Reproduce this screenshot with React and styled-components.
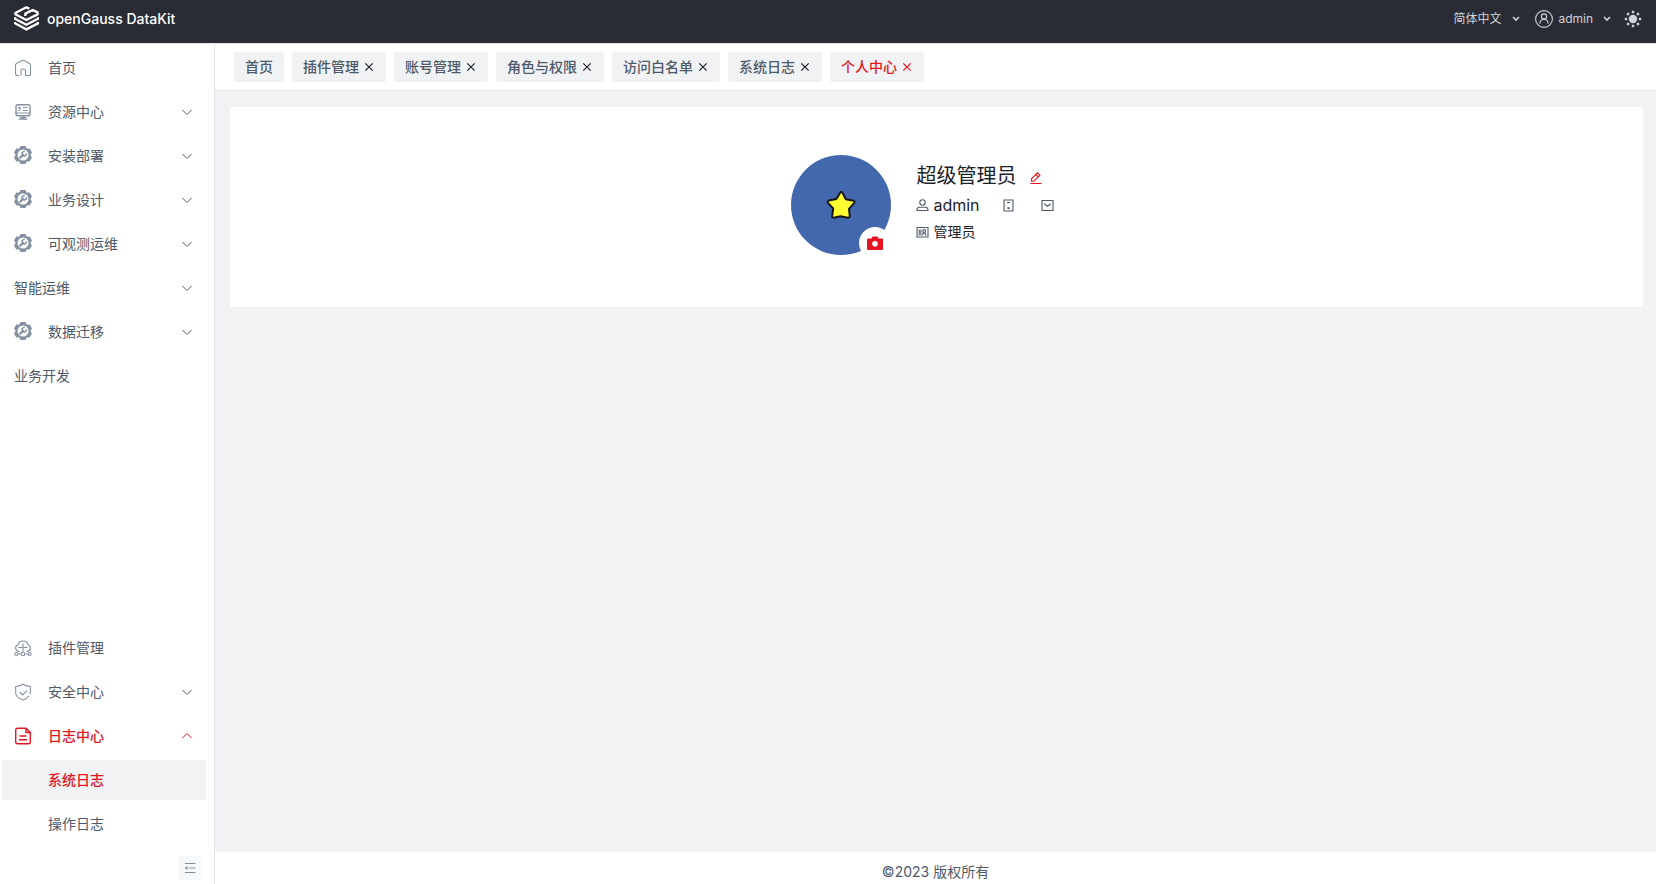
import React from "react";
import styled, { createGlobalStyle } from "styled-components";

const c = {
  dark: "#2a2c35",
  line: "#e5e6eb",
  bg: "#f1f2f4",
  text: "#4e5969",
  strong: "#1d2129",
  icon: "#8591a0",
  red: "#e41520",
  light: "#cfd3da",
};

const Global = createGlobalStyle`
  *, *::before, *::after { box-sizing: border-box; }
  body {
    margin: 0;
    font-family: Inter, "Noto Sans CJK SC", sans-serif;
    font-size: 14px;
    line-height: 22px;
    color: ${c.strong};
    background: ${c.bg};
  }
  button, select {
    font: inherit;
    color: inherit;
    border: 0;
    padding: 0;
    margin: 0;
    background: none;
    cursor: pointer;
  }
  a { color: inherit; text-decoration: none; }
  ul { list-style: none; margin: 0; padding: 0; }
  svg { display: block; flex: none; }
`;

const Page = styled.div`
  display: flex;
  flex-direction: column;
  height: 100vh;
  overflow: hidden;
`;

const Header = styled.header`
  display: flex;
  flex: none;
  align-items: center;
  justify-content: space-between;
  height: 44px;
  padding: 0 14px 6px;
  background: ${c.dark};
  border-bottom: 1px solid ${c.line};
`;

const Brand = styled.a`
  display: flex;
  align-items: center;
  gap: 8px;
  color: #fff;
  font-weight: 500;
`;

const HeaderTools = styled.div`
  display: flex;
  align-items: center;
  color: ${c.light};
  font-size: 12px;
`;

const LanguageField = styled.label`
  display: flex;
  align-items: center;
  gap: 10px;
  margin-right: 14px;
`;

const LanguageSelect = styled.select`
  appearance: none;
  width: 48px;
  outline: none;
`;

const UserButton = styled.button`
  display: flex;
  align-items: center;
  margin-right: 12px;
  gap: 5px;
  > span { margin-right: 4px; }
`;

const Body = styled.div`
  display: flex;
  flex: 1;
  min-height: 0;
`;

const Sidebar = styled.nav`
  display: flex;
  flex: none;
  flex-direction: column;
  justify-content: space-between;
  width: 215px;
  padding: 4px 8px 4px 2px;
  background: #fff;
  border-right: 1px solid ${c.line};
`;

const SidebarFoot = styled.div`
  display: flex;
  flex-direction: column;
`;

const Menu = styled.ul`
  display: flex;
  flex-direction: column;
  gap: 4px;
`;

const MenuLink = styled.a`
  display: flex;
  align-items: center;
  height: 40px;
  padding: 0 13px 0 ${(p) => (p.$nested ? 46 : 12)}px;
  border-radius: 2px;
  color: ${(p) => (p.$active ? c.red : c.text)};
  font-weight: ${(p) => (p.$active ? 500 : 400)};
  background: ${(p) => (p.$selected ? c.bg : "transparent")};
  > svg:first-child {
    margin-right: 16px;
    color: ${(p) => (p.$active ? c.red : c.icon)};
  }
  > span { flex: 1; }
`;

const CollapseButton = styled.button`
  display: grid;
  place-items: center;
  align-self: flex-end;
  width: 24px;
  height: 24px;
  margin: 12px 4px 0 0;
  border-radius: 2px;
  color: ${c.icon};
  background: #f7f8fa;
`;

const Main = styled.div`
  display: flex;
  flex: 1;
  flex-direction: column;
  min-width: 0;
`;

const TabBar = styled.div`
  display: flex;
  flex: none;
  gap: 8px;
  height: 47px;
  padding: 8px 19px;
  background: #fff;
  border-bottom: 1px solid ${c.line};
`;

const Tab = styled.div`
  display: flex;
  align-items: center;
  gap: 4px;
  height: 30px;
  padding: 0 11px;
  border-radius: 2px;
  font-weight: 500;
  color: ${(p) => (p.$active ? c.red : c.text)};
  background: ${c.bg};
  > button { color: ${(p) => (p.$active ? c.red : c.strong)}; }
`;

const Content = styled.main`
  flex: 1;
  padding: 16px 13px 16px 15px;
`;

const ProfileCard = styled.section`
  display: flex;
  align-items: center;
  justify-content: center;
  gap: 25px;
  height: 200px;
  padding-bottom: 4px;
  border-radius: 2px;
  background: #fff;
`;

const Avatar = styled.div`
  position: relative;
  display: grid;
  place-items: center;
  width: 100px;
  height: 100px;
  border-radius: 50%;
  background: #4468ae;
`;

const CameraButton = styled.button`
  position: absolute;
  right: 0;
  bottom: -4px;
  display: grid;
  place-items: center;
  width: 32px;
  height: 32px;
  border-radius: 50%;
  color: ${c.red};
  background: #fff;
`;

const Info = styled.div`
  display: flex;
  flex-direction: column;
  gap: 3px;
  padding-bottom: 4px;
`;

const NameRow = styled.div`
  display: flex;
  align-items: center;
  gap: 14px;
`;

const Name = styled.h1`
  margin: 0;
  font-size: 20px;
  font-weight: 400;
  line-height: 28px;
`;

const EditButton = styled.button`
  color: ${c.red};
  padding-top: 3px;
`;

const DetailRow = styled.div`
  display: flex;
  gap: 22px;
  padding-right: 24px;
`;

const Detail = styled.span`
  display: flex;
  align-items: center;
  gap: 4px;
  min-width: 17px;
  font-size: ${(p) => (p.$large ? 16 : 14)}px;
  line-height: 24px;
  > svg { color: ${c.text}; }
`;

const Footer = styled.footer`
  flex: none;
  height: 32px;
  padding-top: 9px;
  text-align: center;
  color: ${c.text};
  background: #fff;
`;

const Svg = ({ size = 18, w, h, box, children, sw = 1 }) => (
  <svg
    width={w || size}
    height={h || size}
    viewBox={box || `0 0 ${w || size} ${h || size}`}
    fill="none"
    stroke="currentColor"
    strokeWidth={sw}
    aria-hidden="true"
  >
    {children}
  </svg>
);

const Logo = () => (
  <Svg w={25} h={25} box="0 0 75 75" sw={7}>
    <path d="M46 8 37 4 4 21v4l33 17 34-17v-6L56 12 34 23v7" strokeLinejoin="round" />
    <path d="M3 34v4l34 18 35-18v-4" />
    <path d="M3 48v4l34 18 35-18v-4" />
  </Svg>
);

const Chevron = ({ up }) => (
  <Svg size={12}>
    <path d={up ? "M1.500 8 6 3.500 10.500 8" : "M1.500 4 6 8.500 10.500 4"} />
  </Svg>
);

const SmallChevron = () => (
  <Svg size={10} sw={1.6}>
    <path d="M2 3 5 6l3-3" />
  </Svg>
);

const Close = () => (
  <Svg size={12} sw={1.2}>
    <path d="m2.300 2.300 7.400 7.400M9.700 2.300 2.300 9.700" />
  </Svg>
);

const Home = () => (
  <Svg sw={1.1}>
    <path d="M5 16.500H3.500a2 2 0 0 1-2-2V6.200a2 2 0 0 1 1-1.700L8 1.600a2 2 0 0 1 2 0l5.500 2.900a2 2 0 0 1 1 1.700v8.300a2 2 0 0 1-2 2H11.500V11.500A1.500 1.500 0 0 0 10 10H8.500A1.500 1.500 0 0 0 7 11.500v5" />
  </Svg>
);

const Monitor = () => (
  <Svg sw={1.4}>
    <rect x="2" y="1.700" width="14" height="11" rx="1.500" />
    <path d="M2 10h14M4.500 4l2 1.500M6.500 4l-2 1.500M4.500 7.800l2-1M9 4.500h4.500M9 7.500h4.500M9 12.700v2.800M6 14.700h6M4.500 16.200h9" strokeWidth="1.200" />
  </Svg>
);

const Gear = () => (
  <Svg w={18} h={20}>
    <path
      d="M6.500 0h5l.8 2 1.200.7 2.200-.3L18 6.500 16.700 8.300v1.400l1.300 1.800-2.300 4.100-2.200-.3-1.200.7-.8 2h-5l-.8-2-1.200-.7-2.200.3L0 11.500l1.300-1.800V8.300L0 6.500l2.300-4.100 2.200.3L5.700 2Z"
      fill="currentColor"
      stroke="none"
    />
    <circle cx="9" cy="9" r="5.500" fill="#fff" stroke="none" />
    <path d="m6.200 11.800 2.800-2.800" strokeWidth="2.200" strokeLinecap="round" />
    <path d="M10.800 5.600A2.200 2.200 0 1 0 12.400 7.400" strokeWidth="1.600" />
  </Svg>
);

const Cloud = () => (
  <Svg sw={1.1}>
    <path d="M5.500 12.500H4.800A3.500 3.500 0 0 1 4 5.700a5.200 5.200 0 0 1 10 0 3.500 3.500 0 0 1-.8 6.800h-.7M9 4.500v8.500M4.500 8.500h9M3.800 15h3.400M10.800 15h3.400" />
    <circle cx="9" cy="15" r="1.800" />
    <circle cx="2.300" cy="15" r="1.500" />
    <circle cx="15.700" cy="15" r="1.500" />
  </Svg>
);

const Shield = () => (
  <Svg sw={1.1}>
    <path d="M16.300 11V3.500Q12.500 3.500 9 1.300 5.500 3.500 1.700 3.500V10c0 3 3 5.500 7.300 7 2.800-1 4.800-2.500 6-4.300M5.700 9l3 3 4.300-4.300" />
  </Svg>
);

const Doc = () => (
  <Svg sw={1.4}>
    <path d="M12 1.300H3.500A1.800 1.800 0 0 0 1.700 3v12a1.800 1.800 0 0 0 1.800 1.800h11a1.800 1.800 0 0 0 1.800-1.800V5.500ZM12 1.300v4.200h4.300M5.500 9h7M5 12.700h8" />
  </Svg>
);

const Collapse = () => (
  <Svg size={12} sw={1.1}>
    <path d="M1 1.500h10.500M5 6h6.500M1 10.500h10.500" />
    <path d="M.5 6 3.500 4v4Z" fill="currentColor" stroke="none" />
  </Svg>
);

const UserCircle = () => (
  <Svg size={18} sw={1.1}>
    <circle cx="9" cy="9" r="8.400" />
    <circle cx="9" cy="6.500" r="2.600" />
    <path d="M4.800 13.800c.3-2.900 1.900-4.600 4.200-4.600s3.900 1.700 4.200 4.600" />
  </Svg>
);

const Sun = () => (
  <Svg size={18}>
    <circle cx="9" cy="9" r="4.200" fill="currentColor" stroke="none" />
    {[0, 45, 90, 135, 180, 225, 270, 315].map((a) => (
      <rect
        key={a}
        x="7.800"
        y=".8"
        width="2.400"
        height="2.400"
        fill="currentColor"
        stroke="none"
        transform={`rotate(${a} 9 9)`}
      />
    ))}
  </Svg>
);

const Star = () => (
  <Svg size={30}>
    <path
      d="M14.500 2.200q1.200-.8 2 .5l3.300 6.500 7.700 1.500q1.800.7.700 2.200l-5.200 6 .8 7.300q-.2 1.700-2 1.600l-7.300-1.500-6.800 1.500q-1.700 0-1.500-1.800l1-7.500-5.300-5.600q-.8-1.600.8-2.300l7.600-1.600Z"
      fill="#ffff33"
      stroke="#161616"
      strokeWidth="2"
      strokeLinejoin="round"
    />
  </Svg>
);

const Camera = () => (
  <Svg size={16}>
    <path
      d="M5.500 1.500h5l1 2H15a1 1 0 0 1 1 1V14a1 1 0 0 1-1 1H1a1 1 0 0 1-1-1V4.500a1 1 0 0 1 1-1h3.500Z"
      fill="currentColor"
      stroke="none"
    />
    <circle cx="8" cy="8.700" r="2.800" fill="#fff" stroke="none" />
  </Svg>
);

const Pencil = () => (
  <Svg size={12} sw={1.1}>
    <path d="M.5 11.500h11M1.500 9.200V6.800L7.500.8l2.400 2.400-6 6ZM5.800 2.500l2.400 2.400" />
  </Svg>
);

const Person = () => (
  <Svg size={13} sw={1.1}>
    <circle cx="6.500" cy="3.500" r="2.700" />
    <path d="M1 11.500v-.7A2.700 2.700 0 0 1 3.700 8.200h5.600a2.700 2.700 0 0 1 2.700 2.600v.7Z" />
  </Svg>
);

const Phone = () => (
  <Svg size={13} sw={1.1}>
    <path d="M2 1h9v11H2ZM5 3.500h3" />
    <path d="M5.500 8.200h2v2h-2Z" fill="currentColor" stroke="none" />
  </Svg>
);

const Mail = () => (
  <Svg size={13} sw={1.1}>
    <path d="M1 1.500h11v10H1ZM3.200 4.700l3.300 2.500 3.300-2.500" />
  </Svg>
);

const IdCard = () => (
  <Svg size={13} sw={1.1}>
    <path d="M1 1.500h11v9.500H1ZM3.200 3.500v6M4.900 3.500v6M6.500 9.500 7 7.200h2.300l.8 2.300" />
    <circle cx="8.200" cy="5" r="1.400" />
  </Svg>
);

const topMenu = [
  { label: "首页", Icon: Home },
  { label: "资源中心", Icon: Monitor, arrow: true },
  { label: "安装部署", Icon: Gear, arrow: true },
  { label: "业务设计", Icon: Gear, arrow: true },
  { label: "可观测运维", Icon: Gear, arrow: true },
  { label: "智能运维", arrow: true },
  { label: "数据迁移", Icon: Gear, arrow: true },
  { label: "业务开发" },
];

const bottomMenu = [
  { label: "插件管理", Icon: Cloud },
  { label: "安全中心", Icon: Shield, arrow: true },
  { label: "日志中心", Icon: Doc, arrow: true, active: true, up: true },
  { label: "系统日志", nested: true, active: true, selected: true },
  { label: "操作日志", nested: true },
];

const tabs = ["首页", "插件管理", "账号管理", "角色与权限", "访问白名单", "系统日志", "个人中心"];

const MenuList = ({ items }) => (
  <Menu>
    {items.map(({ label, Icon, arrow, up, active, selected, nested }) => (
      <li key={label}>
        <MenuLink href="#" $active={active} $selected={selected} $nested={nested}>
          {Icon && <Icon />}
          <span>{label}</span>
          {arrow && <Chevron up={up} />}
        </MenuLink>
      </li>
    ))}
  </Menu>
);

export default function App() {
  return (
    <Page>
      <Global />
      <Header>
        <Brand href="#">
          <Logo />
          openGauss DataKit
        </Brand>
        <HeaderTools>
          <LanguageField>
            <LanguageSelect aria-label="简体中文">
              <option>简体中文</option>
            </LanguageSelect>
            <SmallChevron />
          </LanguageField>
          <UserButton>
            <UserCircle />
            <span>admin</span>
            <SmallChevron />
          </UserButton>
          <button aria-label="主题">
            <Sun />
          </button>
        </HeaderTools>
      </Header>
      <Body>
        <Sidebar>
          <MenuList items={topMenu} />
          <SidebarFoot>
            <MenuList items={bottomMenu} />
            <CollapseButton aria-label="收起">
              <Collapse />
            </CollapseButton>
          </SidebarFoot>
        </Sidebar>
        <Main>
          <TabBar>
            {tabs.map((t, i) => (
              <Tab key={t} $active={i === tabs.length - 1}>
                <a href="#">{t}</a>
                {i > 0 && (
                  <button aria-label={`关闭${t}`}>
                    <Close />
                  </button>
                )}
              </Tab>
            ))}
          </TabBar>
          <Content>
            <ProfileCard>
              <Avatar>
                <Star />
                <CameraButton aria-label="更换头像">
                  <Camera />
                </CameraButton>
              </Avatar>
              <Info>
                <NameRow>
                  <Name>超级管理员</Name>
                  <EditButton aria-label="编辑">
                    <Pencil />
                  </EditButton>
                </NameRow>
                <DetailRow>
                  <Detail $large>
                    <Person />
                    admin
                  </Detail>
                  <Detail>
                    <Phone />
                  </Detail>
                  <Detail>
                    <Mail />
                  </Detail>
                </DetailRow>
                <DetailRow>
                  <Detail>
                    <IdCard />
                    管理员
                  </Detail>
                </DetailRow>
              </Info>
            </ProfileCard>
          </Content>
          <Footer>©2023 版权所有</Footer>
        </Main>
      </Body>
    </Page>
  );
}
